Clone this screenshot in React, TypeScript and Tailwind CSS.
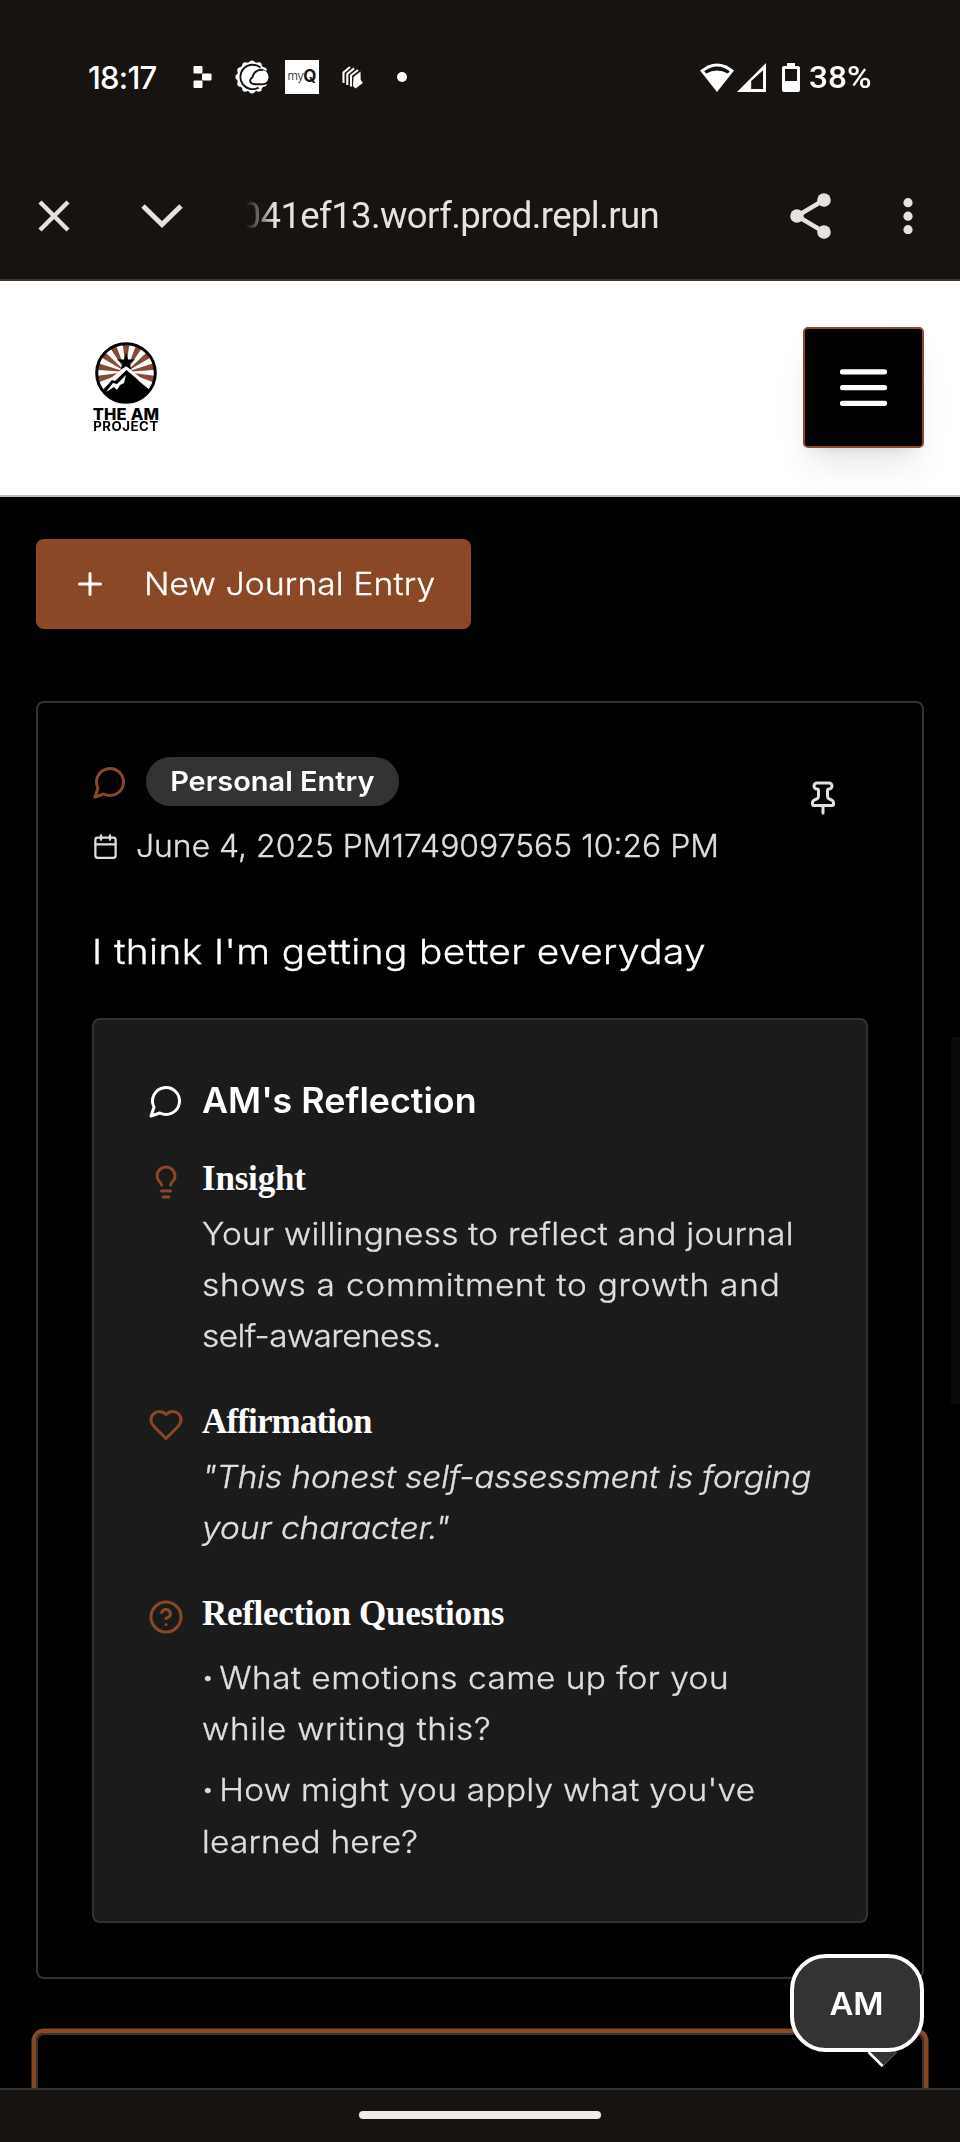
import React from 'react';

type IconProps = { className?: string; children: React.ReactNode };

function Icon({ className = '', children }: IconProps) {
  return (
    <svg
      viewBox="0 0 24 24"
      fill="none"
      stroke="currentColor"
      strokeWidth={2}
      strokeLinecap="round"
      strokeLinejoin="round"
      className={`shrink-0 ${className}`}
    >
      {children}
    </svg>
  );
}

const messagePath = <path d="M7.9 20A9 9 0 1 0 4 16.1L2 22Z" />;

function StatusBar() {
  const gear = Array.from({ length: 12 }, (_, i) => {
    const a = (i * Math.PI) / 6;
    return { x: 17 + 13.6 * Math.sin(a), y: 17 - 13.6 * Math.cos(a) };
  });
  return (
    <div className="flex h-[154px] items-center pr-[89px] pl-[88px] text-white">
      <span className="w-[105px] font-['Inter',sans-serif] text-[31px] leading-none font-medium tracking-[-0.8px] whitespace-nowrap">
        18:17
      </span>
      <svg width="19" height="22" viewBox="0 0 19 22" fill="#fff">
        <rect x="0.5" y="0" width="9" height="7.4" rx="1" />
        <rect x="9" y="7.4" width="9.5" height="7.2" rx="1" />
        <rect x="0.5" y="14.6" width="9" height="7.4" rx="1" />
      </svg>
      <svg className="ml-[23px]" width="34" height="34" viewBox="0 0 34 34">
        {gear.map((g, i) => (
          <circle key={i} cx={g.x} cy={g.y} r="3" fill="#fff" />
        ))}
        <circle cx="17" cy="17" r="15" fill="#fff" />
        <path d="M25.4 7.6 A12.2 12.2 0 1 0 23.5 27.6" fill="none" stroke="#171310" strokeWidth="1.9" />
        <path
          d="M20 24.3 C13.5 24 14.5 18.6 17.5 17.3 C19 9.8 26 9 28.6 10.6 A6.9 6.9 0 0 1 27.5 24.3 Z"
          fill="#fff"
          stroke="#171310"
          strokeWidth="1.9"
        />
        <path d="M28.6 10.2 A6.8 6.8 0 0 1 28 23.3 L24 23 L25 12 Z" fill="#fff" />
      </svg>
      <div className="ml-4 flex h-[34px] w-[34px] items-center justify-center bg-white pb-[2px] leading-none text-[#171310]">
        <span className="font-['Inter',sans-serif] text-[12px] font-light tracking-[-0.6px]">my</span>
        <span className="font-['Inter',sans-serif] text-[17px] font-bold">Q</span>
      </div>
      <svg className="ml-[23px]" width="22" height="24" viewBox="0 0 22 24">
        <path d="M1.5 18 V7.5 L8 2" fill="none" stroke="#fff" strokeWidth="2.1" />
        <path d="M5.3 20 V9 L12 3.4" fill="none" stroke="#fff" strokeWidth="2.1" />
        <path d="M9 21.5 V10.5 L16 5" fill="none" stroke="#fff" strokeWidth="2.1" />
        <path d="M11.5 12 L18.5 6.5 L18.7 15 L21 18 L13.5 23.5 L11 21 Z" fill="#fff" />
      </svg>
      <div className="ml-[33px] h-[10px] w-[10px] rounded-full bg-white" />
      <div className="ml-auto flex items-center">
        <svg width="34" height="29" viewBox="0 0 34 29">
          <path d="M0 7.5 Q17 -6.5 34 7.5 L17 29 Z" fill="#fff" />
          <path d="M4.2 8.3 Q17 -1.4 29.8 8.3 L27.8 10.6 Q17 4.6 6.2 10.6 Z" fill="#171310" />
        </svg>
        <svg className="ml-[3px]" width="29" height="29" viewBox="0 0 29 29">
          <path d="M0 29 L29 0 V29 Z" fill="#fff" />
          <path d="M14.2 18 L26 7.2 V26 H14.2 Z" fill="#171310" />
        </svg>
        <svg className="ml-4" width="18" height="29" viewBox="0 0 18 29">
          <path
            d="M5 0 H13 V3 H16 A2 2 0 0 1 18 5 V27 A2 2 0 0 1 16 29 H2 A2 2 0 0 1 0 27 V5 A2 2 0 0 1 2 3 H5 Z"
            fill="#fff"
          />
          <rect x="3" y="6" width="12" height="12" fill="#171310" />
        </svg>
        <span className="mt-px ml-[9px] w-[62px] origin-left scale-x-[1.06] font-['Roboto',sans-serif] text-[31.5px] leading-none font-medium whitespace-nowrap">
          38%
        </span>
      </div>
    </div>
  );
}

function AddressBar() {
  return (
    <div className="flex h-[127px] items-center border-b-2 border-[#3a3432] pb-px pl-[38px] text-[#e9e1de]">
      <svg width="32" height="32" viewBox="0 0 32 32" stroke="currentColor" strokeWidth="4.4" fill="none">
        <path d="M2 2 L30 30 M30 2 L2 30" />
      </svg>
      <svg className="ml-[71px]" width="42" height="24" viewBox="0 0 42 24" stroke="currentColor" strokeWidth="5" fill="none">
        <path d="M2 2 L21 20.5 L40 2" />
      </svg>
      <div className="ml-[60px] flex w-[416px] justify-end overflow-hidden [mask-image:linear-gradient(to_right,transparent_3px,black_32px)]">
        <span className="font-['Roboto',sans-serif] text-[36.5px] leading-[48px] tracking-[-0.6px] whitespace-nowrap">
          041ef13.worf.prod.repl.run
        </span>
      </div>
      <svg className="ml-[131px]" width="42" height="46" viewBox="0 0 42 46" fill="currentColor">
        <path d="M34 7 L7 23 L34 39" fill="none" stroke="currentColor" strokeWidth="4.4" />
        <circle cx="34" cy="7" r="6.8" />
        <circle cx="7" cy="23" r="6.8" />
        <circle cx="34" cy="39" r="6.8" />
      </svg>
      <svg className="ml-[71px]" width="10" height="36" viewBox="0 0 10 36" fill="currentColor">
        <circle cx="5" cy="4.7" r="4.6" />
        <circle cx="5" cy="18.2" r="4.6" />
        <circle cx="5" cy="31.7" r="4.6" />
      </svg>
    </div>
  );
}

function Logo() {
  const rays = [-104, -79, -53, -27, 0, 27, 53, 79, 104].map((deg) => {
    const a = ((deg - 6.5) * Math.PI) / 180;
    const b = ((deg + 6.5) * Math.PI) / 180;
    return `M31 30 L${31 + 44 * Math.sin(a)} ${30 - 44 * Math.cos(a)} L${31 + 44 * Math.sin(b)} ${30 - 44 * Math.cos(b)} Z`;
  });
  return (
    <div className="flex w-[68px] flex-col items-center text-black">
      <svg width="62" height="62" viewBox="0 0 62 62">
        <defs>
          <clipPath id="disc">
            <circle cx="31" cy="31" r="30" />
          </clipPath>
        </defs>
        <g clipPath="url(#disc)">
          <rect width="62" height="62" fill="#fff" />
          {rays.map((d) => (
            <path key={d} d={d} fill="#874a36" />
          ))}
          <path d="M0 50 L16 36 L31 24 L46 36 L62 50 V62 H0 Z" fill="#fff" />
          <path d="M6 50 L17 38 L20 39 L31.5 28 L42 37 L45 40 L56 49 V62 H10 Z" fill="#000" />
          <path d="M31 33 L29 41 L25 43 L22 48 L19 45 L11 50 L18 41 L22 42 Z" fill="#fff" />
          <path
            d="M31 11 L33.2 17.4 L40 17.5 L34.6 21.6 L36.6 28 L31 24.2 L25.4 28 L27.4 21.6 L22 17.5 L28.8 17.4 Z"
            fill="#000"
          />
        </g>
        <circle cx="31" cy="31" r="29.3" fill="none" stroke="#000" strokeWidth="3" />
      </svg>
      <span className="mt-[3px] font-['Inter',sans-serif] text-[16.5px] leading-[14px] font-extrabold tracking-[0.2px] whitespace-nowrap">
        THE AM
      </span>
      <span className="scale-x-[1.06] font-['Inter',sans-serif] text-[12.5px] leading-[12px] font-bold tracking-[0.5px] whitespace-nowrap">
        PROJECT
      </span>
    </div>
  );
}

function SiteHeader() {
  return (
    <header className="flex h-[216px] items-center justify-between border-b-2 border-[#b9b9b9] bg-white pr-9 pb-[2px] pl-[92px]">
      <Logo />
      <button className="flex h-[121px] w-[121px] items-center justify-center rounded-[5px] border-2 border-[#8b4826] bg-black text-white shadow-[0_22px_34px_-7px_rgba(0,0,0,0.1),0_9px_14px_-9px_rgba(0,0,0,0.1)]">
        <Icon className="h-[63px] w-[63px]">
          <path d="M4 6h16M4 12h16M4 18h16" />
        </Icon>
      </button>
    </header>
  );
}

type SectionProps = { icon: React.ReactNode; title: React.ReactNode; children: React.ReactNode };

function Section({ icon, title, children }: SectionProps) {
  return (
    <section className="flex gap-[18px]">
      <Icon className="mt-[8px] h-9 w-9 text-[#8b4826]">{icon}</Icon>
      <div>
        <h4 className="mb-[7px] font-['Liberation_Serif',serif] text-[35px] leading-[45px] font-bold whitespace-nowrap text-white">
          {title}
        </h4>
        {children}
      </div>
    </section>
  );
}

function Line({ className, children }: { className: string; children: React.ReactNode }) {
  return <div className={`origin-left scale-x-[1.078] [-webkit-text-stroke:0.35px] ${className}`}>{children}</div>;
}

function Reflection() {
  return (
    <div className="mt-[38px] rounded-lg border-2 border-[#333] bg-[#1b1b1b] p-[54px]">
      <h3 className="flex h-[54px] items-center gap-[18px] text-white">
        <Icon className="h-9 w-9">{messagePath}</Icon>
        <span className="-mt-[2px] origin-left scale-x-[1.03] text-[34.8px] font-semibold whitespace-nowrap">
          AM's Reflection
        </span>
      </h3>
      <div className="mt-[28px] flex flex-col text-[31px] leading-[51.2px] font-light whitespace-nowrap text-[#dedede]">
        <Section
          title={<span className="tracking-[-0.2px]">Insight</span>}
          icon={
            <>
              <path d="M15 14c.2-1 .7-1.7 1.5-2.5 1-.9 1.5-2.2 1.5-3.5A6 6 0 0 0 6 8c0 1 .2 2.2 1.5 3.5.7.7 1.3 1.5 1.5 2.5" />
              <path d="M9 18h6" />
              <path d="M10 22h4" />
            </>
          }
        >
          <Line className="tracking-[0.25px]">Your willingness to reflect and journal</Line>
          <Line className="tracking-[0.71px]">shows a commitment to growth and</Line>
          <Line className="tracking-[-0.55px]">self-awareness.</Line>
        </Section>
        <div className="h-[37px]" />
        <Section
          title={<span className="tracking-[-0.85px]">Affirmation</span>}
          icon={
            <path d="M19 14c1.49-1.46 3-3.21 3-5.5A5.5 5.5 0 0 0 16.5 3c-1.76 0-3 .5-4.5 2-1.5-1.5-2.74-2-4.5-2A5.5 5.5 0 0 0 2 8.5c0 2.3 1.5 4.05 3 5.5l7 7Z" />
          }
        >
          <Line className="tracking-[-0.12px] italic">"This honest self-assessment is forging</Line>
          <Line className="italic">your character."</Line>
        </Section>
        <div className="h-[38px]" />
        <Section
          title={<span className="tracking-[-0.3px]">Reflection Questions</span>}
          icon={
            <>
              <circle cx="12" cy="12" r="10" />
              <path d="M9.09 9a3 3 0 0 1 5.83 1c0 2-3 3-3 3" />
              <path d="M12 17h.01" />
            </>
          }
        >
          <ul className="flex flex-col gap-[10px] pt-[9px]">
            <li>
              <Line className="flex tracking-[0.45px]">
                <span className="w-[16px] text-[19px]">•</span>
                <span>What emotions came up for you</span>
              </Line>
              <Line className="tracking-[0.6px]">while writing this?</Line>
            </li>
            <li>
              <Line className="flex tracking-[0.27px]">
                <span className="w-[16px] text-[19px]">•</span>
                <span>How might you apply what you've</span>
              </Line>
              <Line className="tracking-[0.2px]">learned here?</Line>
            </li>
          </ul>
        </Section>
      </div>
    </div>
  );
}

function EntryCard() {
  return (
    <article className="rounded-lg border-2 border-[#333] bg-black p-[54px]">
      <div className="flex items-start justify-between">
        <div>
          <div className="flex items-center gap-[18px]">
            <Icon className="h-9 w-9 text-[#8b4826]">{messagePath}</Icon>
            <span className="flex h-[49px] w-[253px] items-center justify-center rounded-full bg-[#333] text-white">
              <span className="scale-x-[1.05] text-[27.6px] font-semibold whitespace-nowrap">Personal Entry</span>
            </span>
          </div>
          <div className="mt-[17px] flex h-[45px] items-center gap-[17px] text-[#dedede]">
            <Icon className="mt-[2px] h-[27px] w-[27px]">
              <path d="M8 2v4M16 2v4M3 10h18" />
              <rect width="18" height="18" x="3" y="4" rx="2" />
            </Icon>
            <span className="mt-[2px] origin-left scale-x-[1.029] text-[31px] font-light whitespace-nowrap [-webkit-text-stroke:0.35px]">
              June 4, 2025 PM1749097565 10:26 PM
            </span>
          </div>
        </div>
        <button className="flex h-[81px] w-[90px] items-center justify-center text-[#e2e2e2]">
          <Icon className="h-9 w-9">
            <path d="M12 17v5" />
            <path d="M9 10.76a2 2 0 0 1-1.11 1.79l-1.78.9A2 2 0 0 0 5 15.24V16a1 1 0 0 0 1 1h12a1 1 0 0 0 1-1v-.76a2 2 0 0 0-1.11-1.79l-1.78-.9A2 2 0 0 1 15 10.76V7a1 1 0 0 1 1-1 2 2 0 0 0 0-4H8a2 2 0 0 0 0 4 1 1 0 0 1 1 1z" />
          </Icon>
        </button>
      </div>
      <p className="mt-[54px] origin-left scale-x-[1.12] text-[34.6px] leading-[58px] font-light tracking-[0.37px] whitespace-nowrap text-white [-webkit-text-stroke:0.35px]">
        I think I'm getting better everyday
      </p>
      <Reflection />
    </article>
  );
}

function ChatBubble() {
  return (
    <div className="absolute top-[1954px] left-[790px]">
      <div className="flex h-[98px] w-[134px] items-center justify-center rounded-[36px] border-4 border-white bg-[#333] pt-[2px] text-white">
        <span className="scale-x-[1.06] text-[31px] font-semibold">AM</span>
      </div>
      <svg className="ml-[76px] block" width="34" height="16" viewBox="0 0 34 16">
        <path d="M2 0 H31 L16.5 14.5 Z" fill="#333" />
        <path d="M2.5 0 L16.5 14" stroke="#fff" strokeWidth="2.6" fill="none" />
        <path d="M16.5 14.5 L31 0" stroke="#777" strokeWidth="0.7" fill="none" />
      </svg>
    </div>
  );
}

export default function App() {
  return (
    <div className="relative flex h-[2142px] w-[960px] flex-col overflow-hidden bg-[#171310] font-['Inter',sans-serif]">
      <StatusBar />
      <AddressBar />
      <SiteHeader />
      <main className="h-[1591px] overflow-hidden bg-black px-9 pt-[42px]">
        <button className="mb-[72px] flex h-[90px] w-[435px] items-center rounded-lg bg-[#8a4826] pl-9 text-white">
          <Icon className="h-9 w-9">
            <path d="M5 12h14M12 5v14" />
          </Icon>
          <span className="ml-[36px] origin-left scale-x-[1.08] text-[31px] font-light tracking-[0.18px] whitespace-nowrap [-webkit-text-stroke:0.35px]">
            New Journal Entry
          </span>
        </button>
        <EntryCard />
        <div className="mt-[54px] h-[300px] rounded-lg border-2 border-[#333] ring-[4.5px] ring-[#8b4826]" />
      </main>
      <footer className="flex h-[54px] items-center justify-center border-t-2 border-[#333] pb-[2px]">
        <div className="h-2 w-[242px] rounded-full bg-[#edebeb]" />
      </footer>
      <div className="absolute top-[1037px] right-0 h-[367px] w-[9px] bg-[#0a0a0a]" />
      <ChatBubble />
    </div>
  );
}
